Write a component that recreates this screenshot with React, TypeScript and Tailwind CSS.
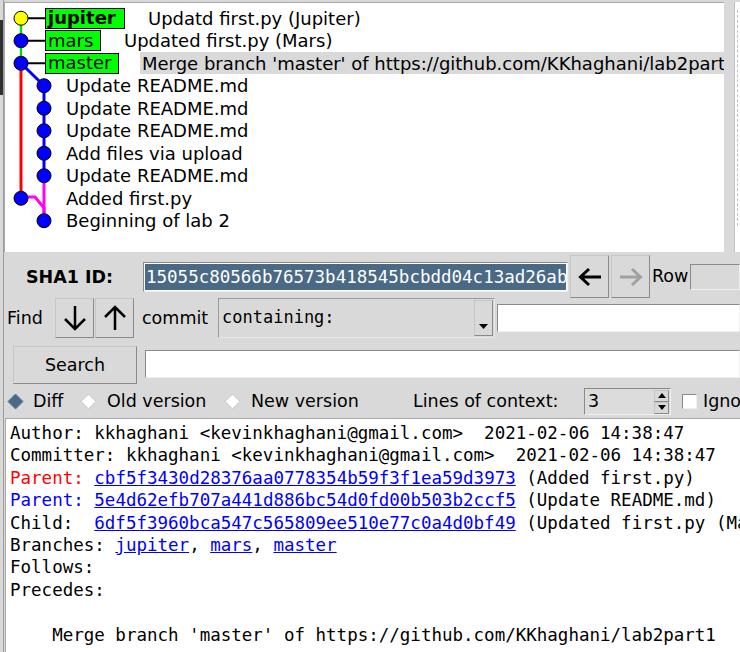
import React from "react";

const raised =
  "border border-t-[#c6c6c6] border-l-[#c6c6c6] border-r-[#8a8a8a] border-b-[#8a8a8a] bg-[#d9d9d9]";
const sunken =
  "border border-t-[#8a8a8a] border-l-[#8a8a8a] border-r-[#efefef] border-b-[#efefef]";

type Row = { text: string; label?: { name: string; w: string; bold?: boolean }; hl?: boolean };

const rows: Row[] = [
  { text: "Updatd first.py (Jupiter)", label: { name: "jupiter", w: "w-[80px]", bold: true } },
  { text: "Updated first.py (Mars)", label: { name: "mars", w: "w-[56px]" } },
  { text: "Merge branch 'master' of https://github.com/KKhaghani/lab2part1", label: { name: "master", w: "w-[74px]" }, hl: true },
  { text: "Update README.md" },
  { text: "Update README.md" },
  { text: "Update README.md" },
  { text: "Add files via upload" },
  { text: "Update README.md" },
  { text: "Added first.py" },
  { text: "Beginning of lab 2" },
];

const ys = [15.25, 37.75, 60.25, 82.75, 105.25, 127.75, 150.25, 172.75, 195.25, 217.75];
const cols = [16, 16, 16, 39, 39, 39, 39, 39, 16, 39];

function Graph() {
  return (
    <svg className="absolute left-0 top-0" width="60" height="240" viewBox="0 0 60 240">
      <line x1="16" y1={ys[0]} x2="16" y2={ys[2]} stroke="#00e000" strokeWidth="2.5" />
      <line x1="16" y1={ys[0]} x2="41" y2={ys[0]} stroke="#000" strokeWidth="2" />
      <line x1="16" y1={ys[1]} x2="41" y2={ys[1]} stroke="#000" strokeWidth="2" />
      <line x1="16" y1={ys[2]} x2="41" y2={ys[2]} stroke="#000" strokeWidth="2" />
      <line x1="16" y1={ys[2]} x2="16" y2={ys[8]} stroke="#ff0000" strokeWidth="3" />
      <line x1="16" y1={ys[2]} x2="39" y2={ys[3]} stroke="#0000ff" strokeWidth="3" />
      <line x1="39" y1={ys[3]} x2="39" y2={ys[7]} stroke="#0000ff" strokeWidth="3" />
      <line x1="39" y1={ys[7]} x2="39" y2={ys[9]} stroke="#ff00ff" strokeWidth="3" />
      <polyline points={`16,194 30,194 39,205 39,${ys[9]}`} fill="none" stroke="#ff00ff" strokeWidth="3" />
      {ys.map((y, i) => (
        <circle key={i} cx={cols[i]} cy={y} r="7" fill={i === 0 ? "#ffff00" : "#0000ff"} stroke="#000" strokeWidth="1" />
      ))}
    </svg>
  );
}

function Diamond({ on }: { on?: boolean }) {
  return (
    <svg width="17" height="17" viewBox="0 0 17 17" className="shrink-0">
      <polygon
        points="8.5,1 16,8.5 8.5,16 1,8.5"
        fill={on ? "#4a6984" : "#ffffff"}
        stroke={on ? "#5a7a96" : "#c4c4c4"}
        strokeWidth="1"
      />
    </svg>
  );
}

function Link({ children }: { children: React.ReactNode }) {
  return <span className="text-[#0000ff] underline">{children}</span>;
}

export default function App() {
  return (
    <div className="flex w-[740px] h-[652px] overflow-hidden bg-[#d9d9d9] text-black font-['DejaVu_Sans',sans-serif]">
      <div className="flex flex-col w-[3px] shrink-0">
        <div className="h-[20px]" />
        <div className="h-[75px] bg-[#303030]" />
      </div>
      <div className="w-[1px] shrink-0 bg-[#9c9c9c]" />
      <div className="flex flex-col w-[736px] shrink-0">
        {/* commit list */}
        <div className="flex h-[252px] pt-[2px] shrink-0">
          <div className="relative w-[720px] h-[250px] shrink-0 border-t border-l border-[#a8a8a8] bg-white pt-[4px] overflow-hidden">
            <Graph />
            {rows.map((r, i) => (
              <div key={i} className="relative flex items-center h-[22.5px] text-[18px] whitespace-nowrap">
                {r.label ? (
                  <>
                    <div className="w-[40px] shrink-0" />
                    <div
                      className={`${r.label.w} h-[21px] shrink-0 border border-black bg-[#00ff00] flex items-center pl-[2px] leading-none ${r.label.bold ? "font-bold" : ""}`}
                    >
                      {r.label.name}
                    </div>
                    <div
                      className={`ml-[21px] pl-[2px] h-[22px] flex items-center ${r.hl ? "flex-1 bg-[#d9d9d9]" : ""}`}
                    >
                      {r.text}
                    </div>
                  </>
                ) : (
                  <div className="ml-[61px]">{r.text}</div>
                )}
              </div>
            ))}
          </div>
          <div className="w-[10px] shrink-0" />
          <div className="flex-1 bg-white border-l border-[#c0c0c0] pt-[8px]">
            <div className="ml-[2px] h-[216px] border-l border-dashed border-[#c4c4c4]" />
          </div>
        </div>

        {/* SHA1 row */}
        <div className="flex items-start h-[46px] text-[17.5px] shrink-0">
          <div className="ml-[22px] w-[117px] h-[30px] mt-[10px] flex items-center font-bold shrink-0">SHA1 ID:</div>
          <div className={`w-[425px] h-[30px] mt-[10px] shrink-0 bg-white p-[1px] ${sunken}`}>
            <div className="h-full bg-[#4a6984] text-white font-['DejaVu_Sans_Mono',monospace] text-[17.5px] leading-[26px] pl-[1px] whitespace-nowrap overflow-hidden">
              15055c80566b76573b418545bcbdd04c13ad26ab
            </div>
          </div>
          <div className={`ml-[2px] w-[39px] h-[43px] mt-[3px] shrink-0 flex items-center justify-center ${raised}`}>
            <svg width="26" height="20" viewBox="0 0 26 20">
              <path d="M24 10H4 M12 2L3.5 10L12 18" stroke="#000" strokeWidth="3" fill="none" />
            </svg>
          </div>
          <div className={`ml-[2px] w-[39px] h-[43px] mt-[3px] shrink-0 flex items-center justify-center ${raised}`}>
            <svg width="26" height="20" viewBox="0 0 26 20">
              <path d="M2 10H22 M14 2L22.5 10L14 18" stroke="#a0a0a0" strokeWidth="3" fill="none" />
            </svg>
          </div>
          <div className="w-[40px] h-[25px] mt-[12px] pl-[2px] flex items-center shrink-0">Row</div>
          <div className={`flex-1 h-[26px] mt-[12px] bg-[#d9d9d9] ${sunken}`} />
        </div>

        {/* Find row */}
        <div className="flex items-start h-[40px] text-[17.5px] shrink-0">
          <div className="ml-[3px] w-[48px] h-[40px] flex items-center shrink-0">Find</div>
          <div className={`w-[39px] h-[40px] shrink-0 flex items-center justify-center ${raised}`}>
            <svg width="24" height="26" viewBox="0 0 24 26">
              <path d="M12 1V24 M2 14L12 24L22 14" stroke="#000" strokeWidth="2.5" fill="none" />
            </svg>
          </div>
          <div className={`ml-[1px] w-[39px] h-[40px] shrink-0 flex items-center justify-center ${raised}`}>
            <svg width="24" height="26" viewBox="0 0 24 26">
              <path d="M12 25V2 M2 12L12 2L22 12" stroke="#000" strokeWidth="2.5" fill="none" />
            </svg>
          </div>
          <div className="ml-[8px] w-[76px] h-[40px] flex items-center shrink-0">commit</div>
          <div className="relative w-[277px] h-[40px] shrink-0 border border-t-[#9a9a9a] border-l-[#9a9a9a] border-r-[#e6e6e6] border-b-[#e6e6e6] bg-[#d9d9d9] flex items-center">
            <div className="pl-[3px] flex-1 font-['DejaVu_Sans_Mono',monospace] text-[17px] whitespace-nowrap">containing:</div>
            <div className={`w-[19px] h-[36px] mr-[1px] shrink-0 flex items-end justify-center pb-[6px] ${raised}`}>
              <svg width="9" height="5" viewBox="0 0 9 5">
                <polygon points="0,0 9,0 4.5,5" fill="#000" />
              </svg>
            </div>
          </div>
          <div className={`ml-[2px] flex-1 h-[28px] mt-[6px] bg-white ${sunken}`} />
        </div>

        {/* Search row */}
        <div className="flex items-start h-[47px] text-[17.5px] shrink-0">
          <div className={`ml-[9px] w-[124px] h-[38px] mt-[8px] shrink-0 flex items-center justify-center ${raised}`}>Search</div>
          <div className={`ml-[8px] flex-1 h-[28px] mt-[12px] bg-white ${sunken}`} />
        </div>

        {/* Radio row */}
        <div className="flex items-center h-[33px] text-[17.5px] whitespace-nowrap shrink-0">
          <div className="ml-[3px]">
            <Diamond on />
          </div>
          <div className="ml-[9px] w-[47px] shrink-0">Diff</div>
          <Diamond />
          <div className="ml-[10px] w-[117px] shrink-0">Old version</div>
          <Diamond />
          <div className="ml-[10px] w-[162px] shrink-0">New version</div>
          <div className="w-[171px] shrink-0">Lines of context:</div>
          <div className={`relative w-[87px] h-[27px] shrink-0 bg-[#dcdcdc] flex items-center ${sunken}`}>
            <div className="pl-[3px] flex-1">3</div>
            <div className="flex flex-col w-[15px] h-[24px] mr-[1px] shrink-0">
              <div className={`h-[12px] flex items-center justify-center ${raised}`}>
                <svg width="8" height="5" viewBox="0 0 8 5"><polygon points="4,0 8,5 0,5" fill="#000" /></svg>
              </div>
              <div className={`h-[12px] flex items-center justify-center ${raised}`}>
                <svg width="8" height="5" viewBox="0 0 8 5"><polygon points="0,0 8,0 4,5" fill="#000" /></svg>
              </div>
            </div>
          </div>
          <div className={`ml-[11px] w-[15px] h-[15px] shrink-0 bg-white ${sunken}`} />
          <div className="ml-[6px]">Ignore space change</div>
        </div>

        {/* Diff pane */}
        <div className="ml-[1px] flex-1 border-t border-l border-[#a8a8a8] bg-white pt-[3px] pl-[4px] overflow-hidden">
          <div className="font-['DejaVu_Sans_Mono',monospace] text-[17.5px] leading-[22.4px] whitespace-pre">
            <div>Author: kkhaghani &lt;kevinkhaghani@gmail.com&gt;  2021-02-06 14:38:47</div>
            <div>Committer: kkhaghani &lt;kevinkhaghani@gmail.com&gt;  2021-02-06 14:38:47</div>
            <div>
              <span className="text-[#ff0000]">Parent:</span> <Link>cbf5f3430d28376aa0778354b59f3f1ea59d3973</Link> (Added first.py)
            </div>
            <div>
              <span className="text-[#0000ff]">Parent:</span> <Link>5e4d62efb707a441d886bc54d0fd00b503b2ccf5</Link> (Update README.md)
            </div>
            <div>
              {"Child:  "}
              <Link>6df5f3960bca547c565809ee510e77c0a4d0bf49</Link> (Updated first.py (Mars))
            </div>
            <div>
              {"Branches: "}
              <Link>jupiter</Link>, <Link>mars</Link>, <Link>master</Link>
            </div>
            <div>Follows:</div>
            <div>Precedes:</div>
            <div>{" "}</div>
            <div>{"    Merge branch 'master' of https://github.com/KKhaghani/lab2part1"}</div>
          </div>
        </div>
      </div>
    </div>
  );
}
